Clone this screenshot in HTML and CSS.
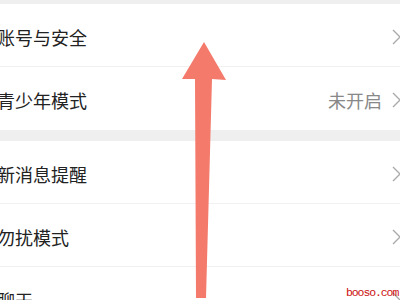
FILE: index.html
```html
<!DOCTYPE html>
<html lang="zh">
<head>
<meta charset="utf-8">
<link rel="stylesheet" href="styles.css">
</head>
<body>
<div class="screen">
  <div class="gap gap-top"></div>
  <div class="group">
    <div class="row"><span class="label">账号与安全</span><span class="right"><svg class="chev" viewBox="0 0 9 16" width="9" height="16"><polyline points="1,1 8,8 1,15"/></svg></span></div>
    <div class="row"><span class="label">青少年模式</span><span class="right"><span class="value">未开启</span><svg class="chev" viewBox="0 0 9 16" width="9" height="16"><polyline points="1,1 8,8 1,15"/></svg></span></div>
  </div>
  <div class="gap"></div>
  <div class="group">
    <div class="row"><span class="label">新消息提醒</span><span class="right"><svg class="chev" viewBox="0 0 9 16" width="9" height="16"><polyline points="1,1 8,8 1,15"/></svg></span></div>
    <div class="row"><span class="label">勿扰模式</span><span class="right"><svg class="chev" viewBox="0 0 9 16" width="9" height="16"><polyline points="1,1 8,8 1,15"/></svg></span></div>
    <div class="row"><span class="label">聊天</span><span class="right"><svg class="chev" viewBox="0 0 9 16" width="9" height="16"><polyline points="1,1 8,8 1,15"/></svg></span></div>
  </div>
  <svg class="arrow" viewBox="0 0 400 300" width="400" height="300">
    <polygon points="204,42 226,80 212,79 206,298 196,298 195,79 182,79"/>
  </svg>
  <div class="watermark">booso.com</div>
</div>
</body>
</html>
```
FILE: styles.css
```css
html, body {
  margin: 0;
  padding: 0;
  background: #ffffff;
}
.screen {
  position: relative;
  width: 400px;
  height: 300px;
  overflow: hidden;
  background: #ffffff;
  font-family: "Noto Sans CJK SC", "Noto Sans", sans-serif;
}
.gap {
  height: 11px;
  background: #efefef;
}
.gap-top {
  height: 4px;
}
.group {
  background: #ffffff;
}
.row {
  box-sizing: border-box;
  height: 63px;
  padding-top: 3px;
  display: flex;
  align-items: center;
  justify-content: space-between;
  border-bottom: 1px solid #f1f1f1;
}
.row:last-child {
  border-bottom: none;
}
.label {
  margin-left: -3px;
  font-size: 18px;
  color: #222222;
  line-height: 24px;
}
.right {
  display: flex;
  align-items: center;
  gap: 10px;
  margin-right: -1px;
}
.value {
  font-size: 18px;
  color: #888888;
  line-height: 24px;
}
.chev {
  display: block;
}
.chev polyline {
  fill: none;
  stroke: #aaaaaa;
  stroke-width: 1.4;
}
.arrow {
  position: absolute;
  left: 0;
  top: 0;
}
.arrow polygon {
  fill: #f47a6b;
}
.watermark {
  position: absolute;
  left: 346px;
  top: 286px;
  font-family: "Liberation Mono", monospace;
  font-size: 11.5px;
  letter-spacing: -1.1px;
  color: #cc1111;
  line-height: 14px;
  white-space: nowrap;
}
```
